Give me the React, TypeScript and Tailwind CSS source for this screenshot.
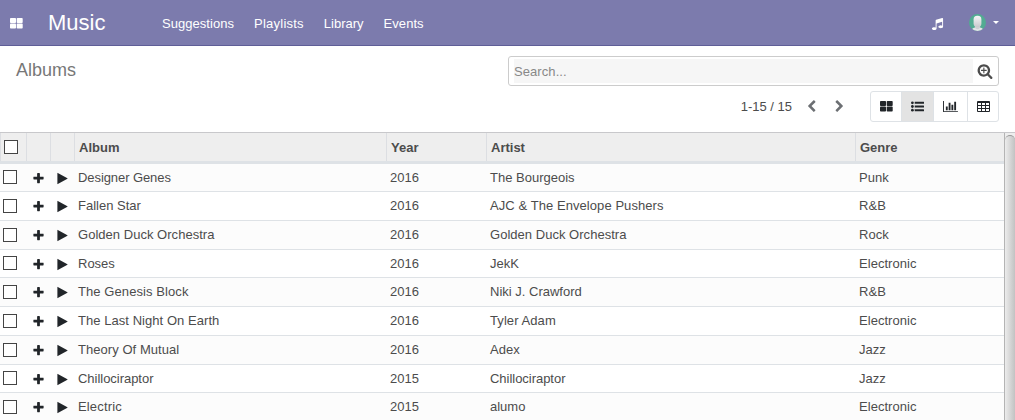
import React from "react";

type IconProps = { className?: string; children: React.ReactNode; box?: string };

function Icon({ className = "", children, box = "0 0 1792 1792" }: IconProps) {
  return (
    <svg viewBox={box} fill="currentColor" className={`block shrink-0 ${className}`} aria-hidden="true">
      {children}
    </svg>
  );
}

const LargeGrid = ({ className = "" }: { className?: string }) => (
  <Icon className={`h-[11px] w-[13px] ${className}`} box="0 0 13 11">
    <rect width="6" height="5" rx="0.8" />
    <rect x="6.7" width="6" height="5" rx="0.8" />
    <rect y="5.6" width="6" height="5" rx="0.8" />
    <rect x="6.7" y="5.6" width="6" height="5" rx="0.8" />
  </Icon>
);

const ListIcon = ({ className }: { className?: string }) => (
  <Icon className={className}>
    {[384, 896, 1408].map((y) => (
      <g key={y}>
        <circle cx="192" cy={y} r="192" />
        <rect x="512" y={y - 128} width="1280" height="256" rx="32" />
      </g>
    ))}
  </Icon>
);

const TableIcon = ({ className = "" }: { className?: string }) => (
  <Icon className={`h-[11px] w-[13px] ${className}`} box="0 0 13 11">
    <path
      fillRule="evenodd"
      d="M1 0h11q1 0 1 1v9q0 1-1 1h-11q-1 0-1-1v-9q0-1 1-1zM1 2h3v2h-3zM5 2h3v2h-3zM9 2h3v2h-3zM1 5h3v2h-3zM5 5h3v2h-3zM9 5h3v2h-3zM1 8h3v2h-3zM5 8h3v2h-3zM9 8h3v2h-3z"
    />
  </Icon>
);

const ChartIcon = ({ className }: { className?: string }) => (
  <Icon className={className} box="0 0 2048 1792">
    <path d="M640 896v512h-256v-512h256zm384-512v1024h-256v-1024h256zm1024 1152v128h-2048v-1536h128v1408h1920zm-640-896v768h-256v-768h256zm384-384v1152h-256v-1152h256z" />
  </Icon>
);

const paths = {
  plus: "M1600 736v192q0 40-28 68t-68 28h-416v416q0 40-28 68t-68 28h-192q-40 0-68-28t-28-68v-416h-416q-40 0-68-28t-28-68v-192q0-40 28-68t68-28h416v-416q0-40 28-68t68-28h192q40 0 68 28t28 68v416h416q40 0 68 28t28 68z",
  play: "M1576 927l-1328 738q-23 13-39.5 3t-16.5-36v-1472q0-26 16.5-36t39.5 3l1328 738q23 13 23 31t-23 31z",
  music:
    "M1664 224v1120q0 50-34 89t-86 60.5-103.5 32-96.5 10.5-96.5-10.5-103.5-32-86-60.5-34-89 34-89 86-60.5 103.5-32 96.5-10.5q105 0 192 39v-537l-768 237v709q0 50-34 89t-86 60.5-103.5 32-96.5 10.5-96.5-10.5-103.5-32-86-60.5-34-89 34-89 86-60.5 103.5-32 96.5-10.5q105 0 192 39v-967q0-31 19-56.5t49-35.5l832-256q12-4 28-4 40 0 68 28t28 68z",
  left: "M1427 301l-531 531 531 531q19 19 19 45t-19 45l-166 166q-19 19-45 19t-45-19l-742-742q-19-19-19-45t19-45l742-742q19-19 45-19t45 19l166 166q19 19 19 45t-19 45z",
  right:
    "M1363 877l-742 742q-19 19-45 19t-45-19l-166-166q-19-19-19-45t19-45l531-531-531-531q-19-19-19-45t19-45l166-166q19-19 45-19t45 19l742 742q19 19 19 45t-19 45z",
  searchPlus:
    "M1088 800v64q0 13-9.5 22.5t-22.5 9.5h-224v224q0 13-9.5 22.5t-22.5 9.5h-64q-13 0-22.5-9.5t-9.5-22.5v-224h-224q-13 0-22.5-9.5t-9.5-22.5v-64q0-13 9.5-22.5t22.5-9.5h224v-224q0-13 9.5-22.5t22.5-9.5h64q13 0 22.5 9.5t9.5 22.5v224h224q13 0 22.5 9.5t9.5 22.5zm128 32q0-185-131.5-316.5t-316.5-131.5-316.5 131.5-131.5 316.5 131.5 316.5 316.5 131.5 316.5-131.5 131.5-316.5zm512 832q0 53-37.5 90.5t-90.5 37.5q-54 0-90-38l-343-342q-179 124-399 124-143 0-273.5-55.5t-225-150-150-225-55.5-273.5 55.5-273.5 150-225 225-150 273.5-55.5 273.5 55.5 225 150 150 225 55.5 273.5q0 220-124 399l343 343q37 37 37 90z",
};

const Glyph = ({ name, className }: { name: keyof typeof paths; className?: string }) => (
  <Icon className={className}>
    <path d={paths[name]} />
  </Icon>
);

function Avatar() {
  return (
    <svg viewBox="0 0 17 17" className="block size-[17px]" aria-hidden="true">
      <defs>
        <clipPath id="avatar-clip">
          <circle cx="8.5" cy="8.5" r="8.5" />
        </clipPath>
        <linearGradient id="avatar-face" x1="0" y1="0" x2="0" y2="1">
          <stop offset="0" stopColor="#f6f6f8" />
          <stop offset="1" stopColor="#c9cacd" />
        </linearGradient>
      </defs>
      <g clipPath="url(#avatar-clip)">
        <rect width="17" height="17" fill="#52ab92" />
        <path d="M2.5 17q0-2.8 3.3-3.4l2.7 1 2.7-1q3.3.6 3.3 3.4z" fill="#e4e4e8" />
        <path d="M6 10.5h5v3.5l-2.5 1.2-2.5-1.2z" fill="#cfd0d4" />
        <rect x="4.6" y="1.8" width="7.8" height="11.2" rx="3.6" fill="url(#avatar-face)" />
      </g>
    </svg>
  );
}

const menu = [
  { label: "Suggestions", spacing: "tracking-[0.04px]" },
  { label: "Playlists", spacing: "tracking-[0.24px]" },
  { label: "Library", spacing: "tracking-normal" },
  { label: "Events", spacing: "tracking-[0.05px]" },
];

const albums = [
  { title: "Designer Genes", year: 2016, artist: "The Bourgeois", genre: "Punk", size: "h-[28px]", spacing: "tracking-[-0.08px]", artistSpacing: "" },
  { title: "Fallen Star", year: 2016, artist: "AJC & The Envelope Pushers", genre: "R&B", size: "h-[29px]", spacing: "", artistSpacing: "tracking-[0.07px]" },
  { title: "Golden Duck Orchestra", year: 2016, artist: "Golden Duck Orchestra", genre: "Rock", size: "h-[29px]", spacing: "tracking-[0.03px]", artistSpacing: "tracking-[0.03px]" },
  { title: "Roses", year: 2016, artist: "JekK", genre: "Electronic", size: "h-[28px]", spacing: "", artistSpacing: "" },
  { title: "The Genesis Block", year: 2016, artist: "Niki J. Crawford", genre: "R&B", size: "h-[29px]", spacing: "tracking-[0.08px]", artistSpacing: "" },
  { title: "The Last Night On Earth", year: 2016, artist: "Tyler Adam", genre: "Electronic", size: "h-[29px]", spacing: "tracking-[0.05px]", artistSpacing: "tracking-[0.08px]" },
  { title: "Theory Of Mutual", year: 2016, artist: "Adex", genre: "Jazz", size: "h-[29px]", spacing: "tracking-[0.05px]", artistSpacing: "" },
  { title: "Chillociraptor", year: 2015, artist: "Chillociraptor", genre: "Jazz", size: "h-[28px]", spacing: "tracking-[-0.03px]", artistSpacing: "tracking-[-0.03px]" },
  { title: "Electric", year: 2015, artist: "alumo", genre: "Electronic", size: "h-[29px]", spacing: "tracking-[0.15px]", artistSpacing: "" },
];

const columns = "grid grid-cols-[27px_24px_24px_312px_100px_369px_1fr]";

const Checkbox = () => <span className="block size-[14px] shrink-0 border border-[#444] bg-white" />;

export default function App() {
  return (
    <div className="flex h-[420px] w-[1015px] flex-col overflow-hidden bg-white font-['Liberation_Sans',Arial,sans-serif] text-[13px] leading-[19px] text-[#4c4c4c]">
      <header className="flex h-[46px] shrink-0 items-center border-b border-[#5f5e97] bg-[#7c7bad] pl-[10px] pr-4 text-white">
        <LargeGrid className="mt-px" />
        <h1 className="ml-[25px] w-[114px] text-[22px] leading-[30px]">Music</h1>
        <nav className="flex gap-5 pt-[2px]">
          {menu.map((item) => (
            <a key={item.label} className={item.spacing}>
              {item.label}
            </a>
          ))}
        </nav>
        <div className="ml-auto flex items-center">
          <Glyph name="music" className="mr-[25px] mt-[2px] size-[13px]" />
          <Avatar />
          <svg viewBox="0 0 6 3" className="ml-[7px] h-[3px] w-[6px]" fill="white" aria-hidden="true">
            <path d="M0 0h6L3 3z" />
          </svg>
        </div>
      </header>

      <section className="flex h-[86px] shrink-0 justify-between pl-4 pr-4">
        <h2 className="pt-[12px] text-[18px] leading-[24px] text-[#777]">Albums</h2>
        <div className="flex w-[491px] flex-col pt-[10px]">
          <div className="flex h-[30px] items-center rounded-[3px] border border-[#ccc] pl-[5px] pr-[5px]">
            <div className="flex h-[24px] flex-1 items-center bg-[#f6f6f6] pt-px tracking-[0.08px] text-[#888]">Search...</div>
            <Glyph name="searchPlus" className="ml-[4px] size-[16px]" />
          </div>
          <div className="mt-[5px] flex h-[31px] items-center justify-end">
            <span>1-15 / 15</span>
            <Glyph name="left" className="ml-[13px] size-[13px] text-[#6c6f73]" />
            <Glyph name="right" className="ml-[15px] mr-[24px] size-[13px] text-[#6c6f73]" />
            <div className="flex h-[31px] w-[129px] overflow-hidden rounded-[3px] border border-[#dee2e6] text-[#212529]">
              <button className="grid w-[31px] place-items-center border-r border-[#dee2e6]">
                <LargeGrid />
              </button>
              <button className="grid w-[32px] place-items-center border-r border-[#dee2e6] bg-[#e3e3e3]">
                <ListIcon className="size-[13px]" />
              </button>
              <button className="grid w-[34px] place-items-center border-r border-[#dee2e6]">
                <ChartIcon className="h-[13px] w-[15px]" />
              </button>
              <button className="grid flex-1 place-items-center">
                <TableIcon />
              </button>
            </div>
          </div>
        </div>
      </section>

      <main className="flex min-h-0 flex-1 border-t border-[#c8c8cb]">
        <div className="flex w-[1004px] flex-col">
          <div className={`${columns} h-[31px] shrink-0 border-b-3 border-[#dee2e6] bg-[#eee] font-bold`}>
            <div className="flex items-center border-x border-[#dcdee2] pl-[3px]">
              <Checkbox />
            </div>
            <div className="border-r border-[#dcdee2]" />
            <div className="border-r border-[#dcdee2]" />
            {["Album", "Year", "Artist", "Genre"].map((label) => (
              <div key={label} className="flex items-center border-r border-[#dcdee2] pl-[4px] pt-px last:border-r-0">
                {label}
              </div>
            ))}
          </div>
          {albums.map((album) => (
            <div key={album.title} className={`${columns} ${album.size} shrink-0 items-center border-b border-[#dee2e6] pb-px odd:bg-white even:bg-[#fcfcfc]`}>
              <div className="pl-[3px]">
                <Checkbox />
              </div>
              <Glyph name="plus" className="ml-[5px] mt-[2px] size-[13px] text-[#212529]" />
              <Glyph name="play" className="ml-[5px] mt-[2px] size-[13px] text-[#212529]" />
              <div className={`pl-[3px] ${album.spacing}`}>{album.title}</div>
              <div className="pl-[3px]">{album.year}</div>
              <div className={`pl-[3px] ${album.artistSpacing}`}>{album.artist}</div>
              <div className="pl-[3px] tracking-[0.04px]">{album.genre}</div>
            </div>
          ))}
        </div>
        <div className="flex w-[11px] flex-col border-l border-[#b4b4b4] bg-[#eee] pt-[2px]">
          <div className="w-full flex-1 rounded-t-[5px] border-t border-[#999] bg-linear-to-r from-[#ececec] to-[#c2c2c2]" />
        </div>
      </main>
    </div>
  );
}
